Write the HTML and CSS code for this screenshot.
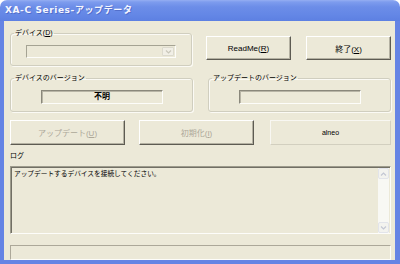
FILE: index.html
```html
<!DOCTYPE html>
<html lang="ja">
<head>
    <meta charset="UTF-8">
    <title>XA-C Series-アップデータ</title>
    <link rel="stylesheet" href="styles.css">
</head>
<body>
    <div class="window">
        <div class="titlebar">XA-C Series-アップデータ</div>
        <div class="client">
            <div class="row row-top">
                <fieldset class="group">
                    <legend>デバイス(<u>D</u>)</legend>
                    <div class="combo">
                        <span class="combo-btn">
                            <svg width="7" height="4" viewBox="0 0 7 4"><path d="M1 0.5 L3.5 3 L6 0.5" fill="none" stroke="#c9c7ba" stroke-width="1.2"/></svg>
                        </span>
                    </div>
                </fieldset>
                <div class="top-buttons">
                    <button class="btn">ReadMe(<u>R</u>)</button>
                    <button class="btn">終了(<u>X</u>)</button>
                </div>
            </div>

            <div class="row row-version">
                <fieldset class="group group-version">
                    <legend>デバイスのバージョン</legend>
                    <div class="field">不明</div>
                </fieldset>
                <fieldset class="group group-version">
                    <legend>アップデートのバージョン</legend>
                    <div class="field"></div>
                </fieldset>
            </div>

            <div class="row row-actions">
                <button class="btn btn-wide" disabled>アップデート(<u>U</u>)</button>
                <button class="btn btn-wide" disabled>初期化(<u>I</u>)</button>
                <div class="brand">alneo</div>
            </div>

            <div class="log-label">ログ</div>
            <div class="log">
                <div class="log-text">アップデートするデバイスを接続してください。</div>
                <div class="scrollbar">
                    <span class="scroll-arrow">
                        <svg width="7" height="4" viewBox="0 0 7 4"><path d="M1 3.5 L3.5 1 L6 3.5" fill="none" stroke="#c3c7d3" stroke-width="1.2"/></svg>
                    </span>
                    <span class="scroll-track"></span>
                    <span class="scroll-arrow">
                        <svg width="7" height="4" viewBox="0 0 7 4"><path d="M1 0.5 L3.5 3 L6 0.5" fill="none" stroke="#c3c7d3" stroke-width="1.2"/></svg>
                    </span>
                </div>
            </div>
            <div class="statusbar"></div>
        </div>
    </div>
</body>
</html>
```

FILE: styles.css
```css
body {
    margin: 0;
    background: #ffffff;
    font-family: "Liberation Sans", "Noto Sans CJK JP", sans-serif;
}
.window {
    width: 400px;
    height: 264px;
    display: flex;
    flex-direction: column;
}
.titlebar {
    height: 21px;
    line-height: 21px;
    padding-left: 5px;
    border-radius: 7px 7px 0 0;
    background: linear-gradient(#95aef2 0, #7d9cee 2px, #6c8de8 7px, #6487e6 70%, #5d80e2 100%);
    color: #f4f6ff;
    font-family: "DejaVu Sans", "Noto Sans CJK JP", sans-serif;
    font-weight: bold;
    font-size: 9px;
    letter-spacing: 0.6px;
    text-shadow: 1px 1px 0 rgba(40, 60, 150, 0.35);
}
.client {
    flex: 1;
    background: #ece9d8;
    border: solid #6584e4;
    border-width: 0 5px 4px 4px;
    padding: 8px 4px 0 6px;
    display: flex;
    flex-direction: column;
    font-size: 7px;
    color: #000;
}
.row {
    display: flex;
}
.group {
    box-sizing: border-box;
    width: 183px;
    margin: 0;
    padding: 0;
    border: 1px solid #d0cebf;
    border-radius: 3px;
    box-shadow: inset 1px 1px 0 #fbfaf5, 1px 1px 0 #fbfaf5;
}
.group legend {
    margin-left: 3px;
    padding: 0 1px;
    font-size: 7px;
    line-height: 8px;
}
.row-top .group {
    height: 37px;
}
.combo {
    box-sizing: border-box;
    width: 150px;
    height: 13px;
    margin: 8px 0 0 15px;
    border: 1px solid;
    border-color: #a5a393 #fdfdfa #fdfdfa #a5a393;
    display: flex;
    justify-content: flex-end;
    padding: 1px;
}
.combo-btn {
    width: 10px;
    border: 1px solid #dcdace;
    border-radius: 1px;
    background: #f1efe6;
    display: flex;
    align-items: center;
    justify-content: center;
}
.top-buttons {
    display: flex;
    gap: 15px;
    margin: 7px 0 0 14px;
}
.btn {
    box-sizing: border-box;
    width: 85px;
    height: 24px;
    margin: 0;
    padding: 0;
    border: 1px solid;
    border-color: #ffffff #5d5b52 #5d5b52 #ffffff;
    box-shadow: inset -1px -1px 0 #b4b1a2;
    background: #ece9d8;
    font-family: "Liberation Sans", "Noto Sans CJK JP", sans-serif;
    font-size: 8px;
    color: #000;
}
.btn:disabled {
    color: #aca899;
}
.row-version {
    gap: 15px;
    margin-top: 8px;
}
.group-version {
    height: 38px;
}
.field {
    box-sizing: border-box;
    width: 122px;
    height: 14px;
    margin: 8px 0 0 30px;
    border: 1px solid;
    border-color: #8a887b #fdfdfa #fdfdfa #8a887b;
    box-shadow: inset 1px 1px 0 #b8b5a6;
    text-align: center;
    font-size: 8px;
    line-height: 12px;
    font-weight: bold;
}
.row-actions {
    margin-top: 8px;
    height: 25px;
}
.btn-wide {
    width: 115px;
    height: 25px;
    margin-right: 14px;
}
.btn-wide + .btn-wide {
    margin-right: 16px;
}
.brand {
    box-sizing: border-box;
    width: 121px;
    border: 1px solid;
    border-color: #f8f7f2 #d2cfbf #d2cfbf #f8f7f2;
    text-align: center;
    font-size: 7px;
    line-height: 23px;
}
.log-label {
    margin-top: 5px;
    line-height: 11px;
    font-size: 7px;
}
.log {
    box-sizing: border-box;
    height: 68px;
    margin-top: 5px;
    border: 1px solid;
    border-color: #9d9b8c #fdfdfa #fdfdfa #9d9b8c;
    box-shadow: inset 1px 1px 0 #716f64;
    display: flex;
}
.log-text {
    flex: 1;
    padding: 2px 3px;
    font-size: 6.7px;
    line-height: 9px;
}
.scrollbar {
    width: 11px;
    margin: 1px 1px 0 0;
    display: flex;
    flex-direction: column;
    background: #f8f8f4;
}
.scroll-arrow {
    height: 11px;
    box-sizing: border-box;
    border: 1px solid #e2e4ea;
    border-radius: 2px;
    background: #f3f3ef;
    display: flex;
    align-items: center;
    justify-content: center;
}
.scroll-track {
    flex: 1;
}
.statusbar {
    box-sizing: border-box;
    height: 15px;
    margin-top: 11px;
    border: 1px solid;
    border-color: #aca899 #fdfdfa #fdfdfa #aca899;
}
```
